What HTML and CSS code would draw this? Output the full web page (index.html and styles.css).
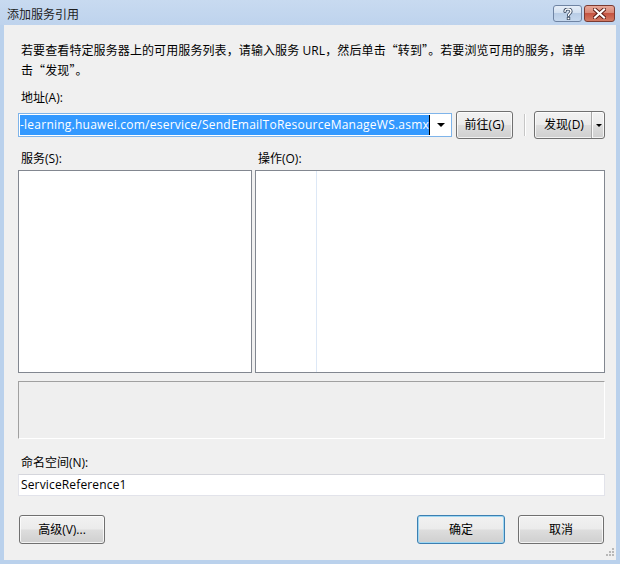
FILE: index.html
```html
<!DOCTYPE html>
<html lang="zh-CN">
<head>
<meta charset="utf-8">
<title>添加服务引用</title>
<link rel="stylesheet" href="styles.css">
</head>
<body>
<div class="window">
  <div class="titlebar">
    <span class="title">添加服务引用</span>
    <div class="caption-btns">
      <div class="cbtn help">
        <svg width="10" height="12" viewBox="0 0 10 12">
          <path d="M2 3.5 C2 1.5 3.5 1 5 1 C6.8 1 8 2 8 3.6 C8 5.2 5.5 5.6 5.5 7.5" fill="none" stroke="#3a4a62" stroke-width="3.2" stroke-linecap="round"/>
          <path d="M2 3.5 C2 1.5 3.5 1 5 1 C6.8 1 8 2 8 3.6 C8 5.2 5.5 5.6 5.5 7.5" fill="none" stroke="#fff" stroke-width="1.4" stroke-linecap="round"/>
          <rect x="3.8" y="9" width="3.4" height="3" fill="#3a4a62"/>
          <rect x="4.6" y="9.7" width="1.8" height="1.6" fill="#fff"/>
        </svg>
      </div>
      <div class="cbtn close">
        <svg width="13" height="11" viewBox="0 0 13 11">
          <path d="M2 1.5 L11 9.5 M11 1.5 L2 9.5" stroke="#5a1a12" stroke-width="4" stroke-linecap="square"/>
          <path d="M2 1.5 L11 9.5 M11 1.5 L2 9.5" stroke="#fff" stroke-width="2.2" stroke-linecap="square"/>
        </svg>
      </div>
    </div>
  </div>
  <div class="client">
    <p class="intro">若要查看特定服务器上的可用服务列表，请输入服务 URL，然后单击<span class="cjk">“转到”</span>。若要浏览可用的服务，请单<br>击<span class="cjk">“发现”</span>。</p>
    <div class="lbl lbl-addr">地址(A):</div>
    <div class="addr-row">
      <div class="combo">
        <span class="sel">-learning.huawei.com/eservice/SendEmailToResourceManageWS.asmx</span>
        <span class="caret"></span>
        <span class="arrow"></span>
      </div>
      <div class="btn go">前往(G)</div>
      <div class="sep"></div>
      <div class="btn split">
        <span class="split-main">发现(D)</span>
        <span class="split-drop"><span class="arrow small"></span></span>
      </div>
    </div>
    <div class="lists">
      <div class="col col-services">
        <div class="lbl">服务(S):</div>
        <div class="listbox"></div>
      </div>
      <div class="col col-ops">
        <div class="lbl">操作(O):</div>
        <div class="listbox ops-box"><div class="guide"></div></div>
      </div>
    </div>
    <div class="desc"></div>
    <div class="lbl lbl-ns">命名空间(N):</div>
    <div class="textbox">ServiceReference1</div>
    <div class="footer">
      <div class="btn adv">高级(V)...</div>
      <div class="spacer"></div>
      <div class="btn ok">确定</div>
      <div class="btn cancel">取消</div>
    </div>
    <svg class="grip" width="10" height="10" viewBox="0 0 10 10">
      <g fill="#b8b8b8">
        <rect x="8" y="0" width="2" height="2"/>
        <rect x="5" y="3" width="2" height="2"/><rect x="8" y="3" width="2" height="2"/>
        <rect x="2" y="6" width="2" height="2"/><rect x="5" y="6" width="2" height="2"/><rect x="8" y="6" width="2" height="2"/>
      </g>
    </svg>
  </div>
</div>
</body>
</html>
```
FILE: styles.css
```css
* { box-sizing: border-box; }
html, body { margin: 0; padding: 0; }
body {
  font-family: "Open Sans", "Noto Sans CJK SC", sans-serif;
  font-size: 12px;
  color: #000;
  background: #fff;
}
.cjk { font-family: "Noto Sans CJK SC", sans-serif; }

.window {
  width: 620px;
  height: 564px;
  background: #bad1ec;
  display: flex;
  flex-direction: column;
}
.titlebar {
  height: 25px;
  flex: none;
  display: flex;
  justify-content: space-between;
  align-items: flex-start;
  background: linear-gradient(#c8daf0, #bed3ed);
}
.title {
  margin: 4px 0 0 7px;
  line-height: 19px;
  font-family: "Noto Sans CJK SC", sans-serif;
  color: #1e1e1e;
}
.caption-btns {
  display: flex;
  gap: 2px;
  margin: 5px 5px 0 0;
}
.cbtn {
  height: 17px;
  border-radius: 3px;
  display: flex;
  align-items: center;
  justify-content: center;
}
.help {
  width: 29px;
  border: 1px solid #6f84a3;
  background: linear-gradient(#e6eef8 0%, #d4e1f1 45%, #b9cde6 50%, #c6d8ee 100%);
}
.close {
  width: 31px;
  border: 1px solid #7a3b32;
  background: linear-gradient(#e8a899 0%, #d88877 45%, #c65442 50%, #d27a63 100%);
}

.client {
  flex: 1;
  margin: 0 4px 4px 4px;
  background: #f0f0f0;
  padding: 0 11px 0 14px;
  display: flex;
  flex-direction: column;
  position: relative;
}
.intro {
  margin: 15px 0 0 0;
  padding-left: 3px;
  line-height: 19px;
  white-space: nowrap;
  letter-spacing: 0.1px;
}
.lbl {
  padding-left: 3px;
  line-height: 19px;
  height: 19px;
}
.lbl-addr { margin-top: 8px; }

.addr-row {
  margin-top: 4px;
  display: flex;
  align-items: center;
  height: 28px;
}
.combo {
  width: 434px;
  height: 24px;
  border: 1px solid #7eb4ea;
  background: #fff;
  display: flex;
  align-items: center;
  padding-left: 1px;
}
.sel {
  background: #3399ff;
  color: #fff;
  line-height: 20px;
  height: 20px;
  white-space: nowrap;
  letter-spacing: 0.24px;
}
.caret {
  width: 1px;
  height: 20px;
  background: #000;
}
.arrow {
  width: 0;
  height: 0;
  border-left: 4px solid transparent;
  border-right: 4px solid transparent;
  border-top: 4px solid #000;
}
.combo .arrow { margin-left: auto; margin-right: 6px; }
.arrow.small {
  border-left-width: 3px;
  border-right-width: 3px;
  border-top-width: 3px;
}

.btn {
  height: 28px;
  border: 1px solid #707070;
  border-radius: 3px;
  background: linear-gradient(#f2f2f2 0%, #ebebeb 48%, #dddddd 52%, #cfcfcf 100%);
  box-shadow: inset 0 0 0 1px rgba(255,255,255,0.75);
  display: flex;
  align-items: center;
  justify-content: center;
  line-height: 19px;
  padding-bottom: 1px;
}
.go { width: 57px; margin-left: 4px; }
.sep {
  width: 2px;
  height: 22px;
  margin-left: 11px;
  border-left: 1px solid #c6c6c6;
  border-right: 1px solid #fff;
}
.split {
  width: 71px;
  margin-left: 8px;
  padding: 0;
  justify-content: flex-start;
  align-items: stretch;
}
.split-main {
  width: 57px;
  display: flex;
  align-items: center;
  justify-content: center;
  border-right: 1px solid #a8a8a8;
  padding-left: 2px;
  padding-bottom: 1px;
}
.split-drop {
  flex: 1;
  display: flex;
  align-items: center;
  justify-content: center;
  border-left: 1px solid #fafafa;
  padding-top: 1px;
}

.lists {
  margin-top: 10px;
  display: flex;
  gap: 3px;
}
.col { display: flex; flex-direction: column; gap: 2px; }
.col-services { width: 234px; }
.col-ops { flex: 1; }
.listbox {
  height: 203px;
  background: #fff;
  border: 1px solid #828790;
}
.ops-box { display: flex; }
.guide {
  margin-left: 60px;
  width: 1px;
  background: #dde8f6;
}

.desc {
  margin-top: 8px;
  height: 58px;
  border-top: 1px solid #a0a0a0;
  border-left: 1px solid #a0a0a0;
  border-bottom: 1px solid #fff;
  border-right: 1px solid #fff;
  background: #efefef;
}
.lbl-ns { margin-top: 14px; }
.textbox {
  margin-top: 2px;
  height: 22px;
  border: 1px solid #e2e3ea;
  border-top-color: #d5d6dc;
  background: #fff;
  padding-left: 2px;
  line-height: 20px;
  letter-spacing: 0.15px;
}

.footer {
  margin-top: 19px;
  display: flex;
  align-items: center;
}
.footer .btn { height: 29px; }
.adv { width: 86px; margin-left: 1px; }
.spacer { flex: 1; }
.ok {
  width: 88px;
  border-color: #3c7fb1;
  box-shadow: inset 0 0 0 1px #9ed7f3;
}
.cancel { width: 86px; margin-left: 13px; margin-right: 1px; }

.grip {
  position: absolute;
  right: 2px;
  bottom: 2px;
}
```
